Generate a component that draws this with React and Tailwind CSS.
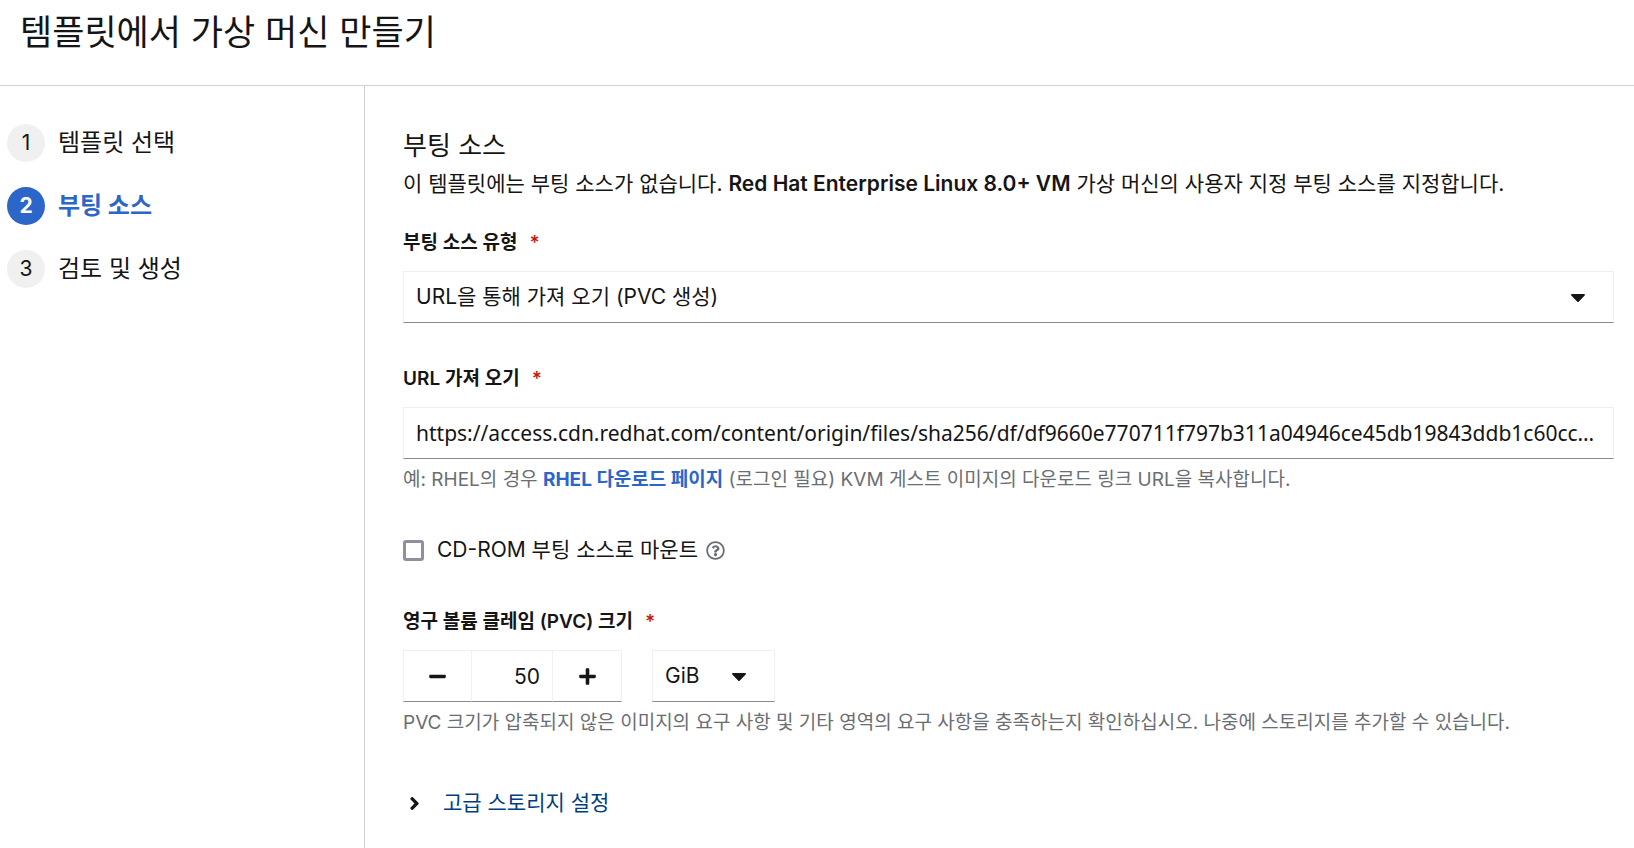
import React, { useState } from 'react';
import { FaAngleRight, FaCaretDown, FaMinus, FaPlus, FaRegQuestionCircle } from 'react-icons/fa';

const STEPS = [
  { id: 1, title: '템플릿 선택' },
  { id: 2, title: '부팅 소스' },
  { id: 3, title: '검토 및 생성' },
];

const IMAGE_URL =
  'https://access.cdn.redhat.com/content/origin/files/sha256/df/df9660e770711f797b311a04946ce45db19843ddb1c60cc…';

const control = 'h-[52px] border border-[#f0f0f0] border-b-[#8a8d90] bg-white';

function FieldLabel({ htmlFor, children }) {
  return (
    <label htmlFor={htmlFor} className="block text-[19px] leading-7 font-semibold">
      {children}
      <span className="ml-3 text-[#c9190b]" aria-hidden="true">*</span>
    </label>
  );
}

function Select({ id, value, className, label }) {
  return (
    <div className={`relative ${className}`}>
      <select
        id={id}
        aria-label={label}
        defaultValue={value}
        className={`${control} w-full appearance-none pl-3 pr-12`}
      >
        <option>{value}</option>
      </select>
      <FaCaretDown className="absolute top-3.5 right-6 size-6 pointer-events-none" />
    </div>
  );
}

function StepNav({ current }) {
  return (
    <nav className="w-[365px] shrink-0 border-r border-[#d2d2d2] pl-[7px] pt-[38px]">
      <ol className="flex flex-col gap-[25px]">
        {STEPS.map((step) => {
          const active = step.id === current;
          return (
            <li key={step.id}>
              <button
                aria-current={active ? 'step' : undefined}
                className={`flex h-[38px] items-center gap-[13px] text-2xl ${active ? 'font-bold text-[#2b66c8]' : ''}`}
              >
                <span
                  className={`flex size-[38px] items-center justify-center rounded-full text-[21px] ${
                    active ? 'bg-[#2b66c8] text-white' : 'bg-[#f0f0f0]'
                  }`}
                >
                  {step.id}
                </span>
                {step.title}
              </button>
            </li>
          );
        })}
      </ol>
    </nav>
  );
}

export default function App() {
  const [size, setSize] = useState(50);

  return (
    <div className="flex min-h-screen flex-col bg-white font-['Inter','Noto_Sans_CJK_KR',sans-serif] text-[21px] text-[#151515]">
      <header className="border-b border-[#d2d2d2] px-5 pt-1 pb-[25px]">
        <h1 className="text-[35px] leading-14">템플릿에서 가상 머신 만들기</h1>
      </header>

      <div className="flex flex-1">
        <StepNav current={2} />

        <main className="min-w-0 flex-1 pl-[38px] pr-5 pt-10">
          <h2 className="text-[26px] leading-10">부팅 소스</h2>
          <p className="leading-9">
            이 템플릿에는 부팅 소스가 없습니다. <b className="font-semibold">Red Hat Enterprise Linux 8.0+ VM</b> 가상
            머신의 사용자 지정 부팅 소스를 지정합니다.
          </p>

          <form onSubmit={(e) => e.preventDefault()}>
            <div className="mt-[27px]">
              <FieldLabel htmlFor="source-type">부팅 소스 유형</FieldLabel>
              <Select id="source-type" value="URL을 통해 가져 오기 (PVC 생성)" className="mt-3.5" />
            </div>

            <div className="mt-[42px]">
              <FieldLabel htmlFor="source-url">URL 가져 오기</FieldLabel>
              <input
                id="source-url"
                type="text"
                defaultValue={IMAGE_URL}
                className={`${control} mt-3.5 block w-full px-3 font-['Noto_Sans',sans-serif] text-ellipsis`}
              />
              <p className="mt-[5px] text-[19px] leading-8 text-[#6a6e73]">
                예: RHEL의 경우{' '}
                <a href="#downloads" className="font-bold text-[#2b66c8]">RHEL 다운로드 페이지</a> (로그인 필요) KVM
                게스트 이미지의 다운로드 링크 URL을 복사합니다.
              </p>
            </div>

            <div className="mt-[38px] flex h-8 items-center">
              <input
                id="cdrom"
                type="checkbox"
                className="size-[21px] appearance-none rounded-[3px] border-3 border-[#8f8f9d] checked:bg-[#2b66c8]"
              />
              <label htmlFor="cdrom" className="ml-[13px]">CD-ROM 부팅 소스로 마운트</label>
              <button type="button" aria-label="도움말" className="ml-2 text-[#6a6e73]">
                <FaRegQuestionCircle className="size-[19px]" />
              </button>
            </div>

            <div className="mt-[42px]">
              <FieldLabel htmlFor="pvc-size">영구 볼륨 클레임 (PVC) 크기</FieldLabel>
              <div className="mt-3.5 flex">
                <button
                  type="button"
                  aria-label="빼기"
                  onClick={() => setSize(size - 1)}
                  className={`${control} flex w-[69px] items-center justify-center`}
                >
                  <FaMinus className="size-[19px]" />
                </button>
                <input
                  id="pvc-size"
                  type="text"
                  inputMode="numeric"
                  value={size}
                  onChange={(e) => setSize(Number(e.target.value) || 0)}
                  className={`${control} w-20 border-x-0 pr-3 text-right`}
                />
                <button
                  type="button"
                  aria-label="더하기"
                  onClick={() => setSize(size + 1)}
                  className={`${control} flex w-[70px] items-center justify-center`}
                >
                  <FaPlus className="size-[19px]" />
                </button>
                <Select id="pvc-unit" label="단위" value="GiB" className="ml-[30px] w-[123px]" />
              </div>
              <p className="mt-[5px] text-[19px] leading-8 text-[#6a6e73]">
                PVC 크기가 압축되지 않은 이미지의 요구 사항 및 기타 영역의 요구 사항을 충족하는지 확인하십시오.
                나중에 스토리지를 추가할 수 있습니다.
              </p>
            </div>

            <button type="button" aria-expanded="false" className="mt-12 flex h-8 items-center gap-[18px] pl-px">
              <FaAngleRight className="size-[21px]" />
              <span className="text-[#004080]">고급 스토리지 설정</span>
            </button>
          </form>
        </main>
      </div>
    </div>
  );
}
